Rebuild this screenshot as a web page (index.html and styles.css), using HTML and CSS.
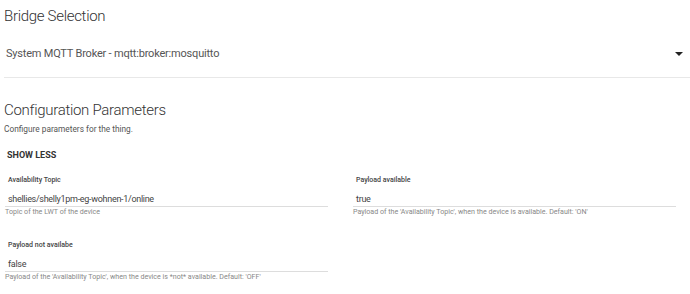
FILE: index.html
```html
<!DOCTYPE html>
<html lang="en">
<head>
    <meta charset="UTF-8">
    <title>Thing Configuration</title>
    <link rel="stylesheet" href="styles.css">
</head>
<body>
    <div class="page">
        <h2 class="section-title first">Bridge Selection</h2>

        <div class="bridge-select">
            <span class="bridge-value">System MQTT Broker - mqtt:broker:mosquitto</span>
            <span class="arrow"></span>
        </div>

        <h2 class="section-title">Configuration Parameters</h2>
        <p class="section-desc">Configure parameters for the thing.</p>

        <button class="show-less">SHOW LESS</button>

        <div class="params">
            <div class="field">
                <div class="field-label">Availability Topic</div>
                <div class="field-input">shellies/shelly1pm-eg-wohnen-1/online</div>
                <div class="field-help">Topic of the LWT of the device</div>
            </div>
            <div class="field">
                <div class="field-label">Payload available</div>
                <div class="field-input">true</div>
                <div class="field-help">Payload of the 'Availability Topic', when the device is available. Default: 'ON'</div>
            </div>
            <div class="field">
                <div class="field-label">Payload not availabe</div>
                <div class="field-input">false</div>
                <div class="field-help">Payload of the 'Availability Topic', when the device is *not* available. Default: 'OFF'</div>
            </div>
        </div>
    </div>
</body>
</html>
```

FILE: styles.css
```css
body {
    margin: 0;
    font-family: Roboto, 'Liberation Sans', sans-serif;
    background-color: #ffffff;
    color: #333333;
}

.page {
    padding: 0 0 0 4px;
}

.section-title {
    font-size: 15px;
    font-weight: 300;
    line-height: 20px;
    letter-spacing: -0.3px;
    margin: 0;
    color: #333333;
}

.section-title.first {
    padding-top: 6px;
}

.bridge-select {
    display: flex;
    align-items: center;
    justify-content: space-between;
    margin-top: 20px;
    padding: 0 7px 15px 2px;
    border-bottom: 1px solid #e8e8e8;
}

.bridge-value {
    font-size: 11px;
    line-height: 16px;
    letter-spacing: -0.2px;
    color: #555555;
}

.arrow {
    width: 0;
    height: 0;
    border-left: 4px solid transparent;
    border-right: 4px solid transparent;
    border-top: 4px solid #222222;
}

.bridge-select + .section-title {
    margin-top: 22px;
}

.section-desc {
    font-size: 8.3px;
    line-height: 10px;
    margin: 4px 0 0;
    color: #555555;
}

.show-less {
    display: block;
    margin: 15px 0 0 3px;
    padding: 0;
    border: none;
    background: none;
    font-family: inherit;
    font-size: 9px;
    font-weight: 700;
    line-height: 12px;
    color: #333333;
}

.params {
    display: grid;
    grid-template-columns: 323px 323px;
    column-gap: 25px;
    row-gap: 25px;
    margin: 15px 0 0 1px;
}

.field-label {
    font-size: 7px;
    font-weight: 500;
    line-height: 9px;
    padding-left: 3px;
    color: #444444;
}

.field-input {
    font-size: 9px;
    line-height: 12px;
    letter-spacing: -0.3px;
    padding: 8px 0 1px 3px;
    border-bottom: 1px solid #dddddd;
    color: #444444;
}

.field-help {
    font-size: 7.1px;
    line-height: 9px;
    color: #888888;
}
```
